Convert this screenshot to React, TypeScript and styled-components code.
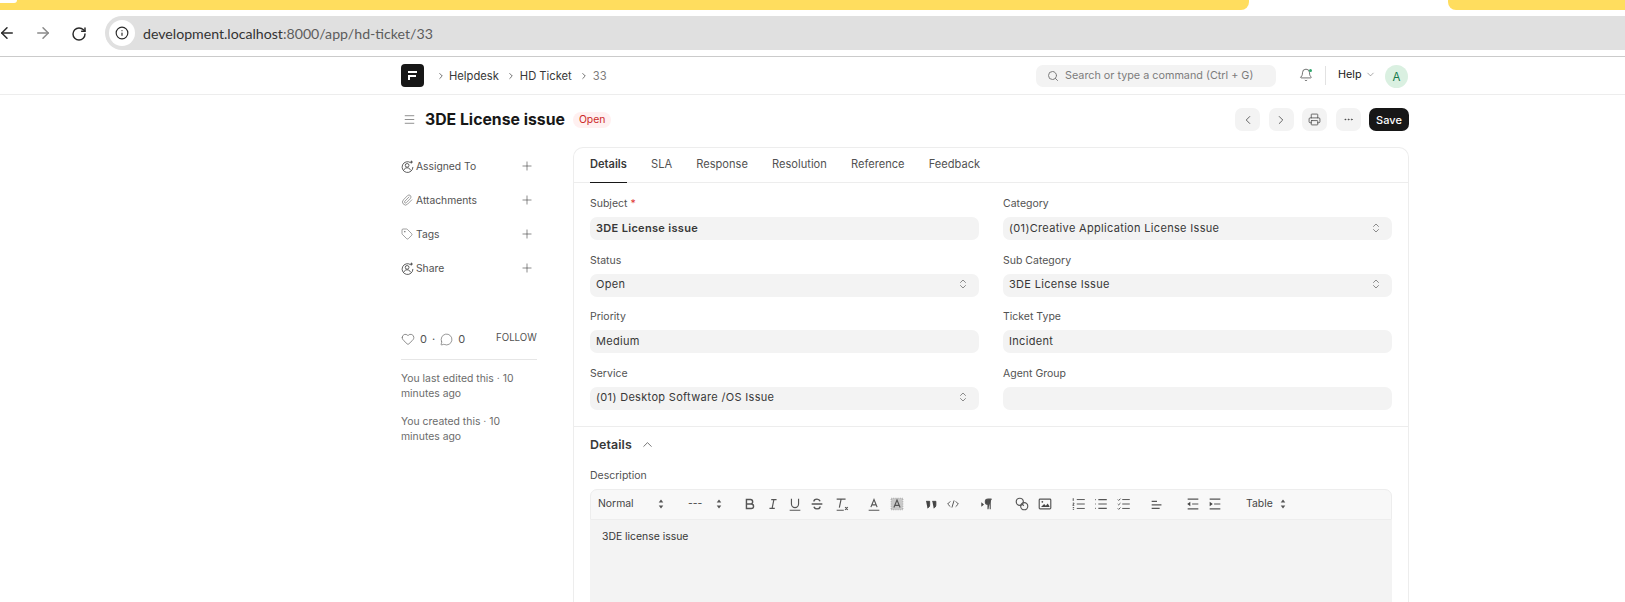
import React from "react";
import styled, { createGlobalStyle } from "styled-components";
import {
  ArrowLeft, ArrowRight, RotateCw, Info, Search, Bell, ChevronLeft, ChevronRight, ChevronDown, ChevronUp,
  ChevronsUpDown, Printer, Ellipsis, Plus, Paperclip, Tag, Heart, MessageCircle, Menu,
} from "lucide-react";

const Global = createGlobalStyle`
  html, body { margin: 0; padding: 0; background: #fff; overflow: hidden; height: 602px; }
  * { box-sizing: border-box; }
  body { font-family: Inter, "Liberation Sans", sans-serif; color: #383838; -webkit-font-smoothing: auto; }
`;
const Page = styled.div`position: relative; width: 1625px; height: 602px; overflow: hidden;`;

const TabStrip = styled.div`height: 16px; position: relative;`;
const YellowTab = styled.div<{ $left: number; $width: number }>`
  position: absolute; top: 0; height: 10px; left: ${p => p.$left}px; width: ${p => p.$width}px;
  background: #ffdd5e; border-radius: 0 0 8px 8px;
`;
const Notch = styled.div`position: absolute; top: 0; left: 0; width: 17px; height: 3px; background: #fff; border-radius: 0 0 6px 0;`;

const BrowserBar = styled.div`height: 41px; border-bottom: 1px solid #cbcbcb; position: relative;`;
const NavGlyph = styled.span<{ $left: number; $top: number; $color: string }>`
  position: absolute; left: ${p => p.$left}px; top: ${p => p.$top}px; color: ${p => p.$color}; display: flex;
`;
const Address = styled.div`
  position: absolute; left: 105px; top: 0; right: 0; height: 34px; background: #e0e0e0;
  border-radius: 17px 0 0 17px; display: flex; align-items: center;
`;
const InfoDot = styled.span`
  width: 26px; height: 26px; margin-left: 4px; border-radius: 50%; background: #fff;
  display: flex; align-items: center; justify-content: center; color: #2a2a2a;
`;
const Url = styled.span`
  margin-left: 8px; font: 14.15px Lato, "Noto Sans", sans-serif; color: #5c5c5c;
  b { font-weight: 400; color: #333; }
`;

const Navbar = styled.div`
  height: 38px; border-bottom: 1px solid #ededed; padding-left: 401px; display: flex; align-items: center; position: relative;
`;
const Logo = styled.div`width: 23px; height: 23px; background: #171717; border-radius: 4px; display: flex; align-items: center; justify-content: center;`;
const Crumbs = styled.div`display: flex; align-items: center; margin-left: 12px; font-size: 11.2px; color: #383838;`;
const Crumb = styled.span<{ $muted?: boolean }>`color: ${p => (p.$muted ? "#7c7c7c" : "#383838")};`;
const CrumbSep = styled.span`display: flex; width: 13px; color: #555; &:not(:first-child){ margin-left: 7px; margin-right: 2px; width: 12px; }`;
const SearchBox = styled.div`
  position: absolute; left: 1036px; top: 8px; width: 240px; height: 22px; background: #f3f3f3; border-radius: 7px;
  display: flex; align-items: center; padding: 0 0 1px 11px; color: #7c7c7c; font-size: 10.8px;
  span { margin-left: 6px; }
`;
const BellWrap = styled.div`position: absolute; left: 1299px; top: 11px; color: #383838; display: flex;`;
const BellDot = styled.i`position: absolute; top: 1px; right: 1px; width: 3px; height: 3px; border-radius: 50%; background: #30a66d;`;
const VRule = styled.div`position: absolute; left: 1325px; top: 9px; width: 1px; height: 19px; background: #e2e2e2;`;
const Help = styled.div`position: absolute; left: 1338px; top: 11px; font-size: 10.8px; font-weight: 400; color: #171717; display: flex; align-items: center; gap: 3px;`;
const Avatar = styled.div`
  position: absolute; left: 1385px; top: 8px; width: 23px; height: 23px; border-radius: 50%; background: #daf0e1;
  color: #16794c; font-size: 11.5px; display: flex; align-items: center; justify-content: center;
`;

const PageHead = styled.div`height: 52px; padding-left: 403px; display: flex; align-items: center; position: relative; padding-bottom: 3px;`;
const Title = styled.h1`margin: 0 0 0 9px; font-size: 15.8px; font-weight: 700; color: #171717; line-height: 20px;`;
const Pill = styled.span`
  margin-left: 8px; height: 16px; padding: 0 6px; border-radius: 8px; background: #fff0f0; color: #cc2929;
  font-size: 10.4px; display: flex; align-items: center;
`;
const Actions = styled.div`position: absolute; left: 1235px; top: 13px; display: flex; gap: 8.5px;`;
const IconBtn = styled.button`
  width: 25px; height: 23px; border: 0; padding: 0; border-radius: 7px; background: #f3f3f3; color: #383838;
  display: flex; align-items: center; justify-content: center;
`;
const SaveBtn = styled.button`
  width: 40px; height: 23px; border: 0; padding: 0; border-radius: 7px; background: #171717; color: #fff;
  font: 500 11px Inter, sans-serif;
`;

const Body = styled.div`display: flex; padding-left: 401px;`;
const Side = styled.aside`width: 136px; margin-right: 36px; flex: none;`;
const SideRow = styled.div`
  height: 34px; display: flex; align-items: center; font-size: 10.3px; color: #525252; position: relative;
`;
const SideIcon = styled.span`width: 15px; display: flex; color: #525252;`;
const SidePlus = styled.span`position: absolute; left: 119px; top: 10px; display: flex; color: #383838;`;
const Items = styled.div`padding-top: 2px;`;
const Likes = styled.div`margin-top: 44px; height: 20px; display: flex; align-items: center; font-size: 11px; color: #525252; position: relative;`;
const Follow = styled.span`position: absolute; left: 95px; top: 3px; font-size: 9.7px; color: #525252;`;
const Gap = styled.span`margin: 0 5px; display: flex;`;
const Rule = styled.div`height: 1px; background: #e6e6e6; margin: 10px 0 11px;`;
const Meta = styled.p`margin: 0 0 13px; font-size: 10.4px; line-height: 15px; color: #6b6b6b;`;

const Card = styled.section`
  width: 836px; height: 460px; border: 1px solid #ededed; border-radius: 10px 10px 0 0; border-bottom: 0; margin-top: 0; flex: none;
`;
const Tabs = styled.div`height: 35px; border-bottom: 1px solid #ededed; display: flex; padding-left: 16px; gap: 24.2px;`;
const TabItem = styled.div<{ $active?: boolean }>`
  height: 35px; line-height: 32px; font-size: 11.1px;
  color: ${p => (p.$active ? "#383838" : "#525252")}; font-weight: ${p => (p.$active ? 600 : 400)};
  border-bottom: 1px solid ${p => (p.$active ? "#171717" : "transparent")};
`;
const FormGrid = styled.div`
  display: grid; grid-template-columns: 389px 389px; column-gap: 24px; grid-auto-rows: 56.5px;
  padding: 12px 16px 0; height: 244px; border-bottom: 1px solid #ededed;
`;
const Field = styled.div``;
const Label = styled.div`font-size: 10.5px; line-height: 18px; height: 22px; color: #525252; span { color: #e03636; }`;
const Control = styled.div<{ $bold?: boolean }>`
  height: 23px; background: #f3f3f3; border-radius: 7px; padding: 0 6px 2px; display: flex; align-items: center;
  justify-content: space-between; font-size: 11px; letter-spacing: .32px; color: #383838;
  font-weight: ${p => (p.$bold ? 600 : 400)};
  svg { color: #525252; margin-right: 4px; }
`;
const Section = styled.div`padding: 0 16px;`;
const SectionHead = styled.div`height: 38px; display: flex; align-items: center; font-size: 12.4px; font-weight: 600; color: #383838; letter-spacing: .1px; gap: 8px; padding-bottom: 4px;`;
const DescLabel = styled.div`font-size: 10.5px; line-height: 22px; color: #525252;`;
const Toolbar = styled.div`
  position: relative; height: 31px; margin-top: 2px; background: #f8f8f8; border: 1px solid #ededed; border-radius: 7px 7px 0 0;
`;
const ToolText = styled.span<{ $x: number }>`position: absolute; left: ${p => p.$x - 591}px; top: 7px; font-size: 10.4px; color: #444;`;
const Tool = styled.svg<{ $x: number }>`position: absolute; left: ${p => p.$x - 591 - 8}px; top: 6px; width: 16px; height: 16px; fill: none; stroke: #555; stroke-width: 1.3;`;
const Editor = styled.div`height: 90px; background: #f3f3f3; padding: 10px 12px; font-size: 10.4px; color: #383838;`;

const UpDown = ({ x }: { x: number }) => (
  <Tool $x={x} viewBox="0 0 16 16"><path d="M8 3.500 10.300 6.500H5.700zM8 12.500 5.700 9.500H10.300z" fill="#555" stroke="none" /></Tool>
);
const T = ({ x, children }: { x: number; children: React.ReactNode }) => <Tool $x={x} viewBox="0 0 18 18">{children}</Tool>;

const UserPlus = () => (
  <svg width="13" height="13" viewBox="0 0 14 14" fill="none" stroke="currentColor" strokeWidth="1">
    <path d="M10.5 3A5.8 5.8 0 1 0 12.8 7.5" /><circle cx="6.6" cy="5.8" r="2" /><path d="M3 11c.6-1.9 2-2.6 3.6-2.6s3 .7 3.6 2.6" />
    <path d="M11.3.7v3M9.8 2.2h3" />
  </svg>
);

const fields: [string, string, boolean?, boolean?, boolean?][] = [
  ["Subject", "3DE License issue", false, true, true],
  ["Category", "(01)Creative Application License Issue", true],
  ["Status", "Open", true],
  ["Sub Category", "3DE License Issue", true],
  ["Priority", "Medium"],
  ["Ticket Type", "Incident"],
  ["Service", "(01) Desktop Software /OS Issue", true],
  ["Agent Group", ""],
];

export default function App() {
  return (
    <Page>
      <Global />
      <TabStrip>
        <YellowTab $left={-10} $width={1259} />
        <YellowTab $left={1448} $width={190} />
        <Notch />
      </TabStrip>
      <BrowserBar>
        <NavGlyph $left={-2} $top={8} $color="#2a2a2a"><ArrowLeft size={18} strokeWidth={2} /></NavGlyph>
        <NavGlyph $left={34} $top={8} $color="#8a8a8a"><ArrowRight size={18} strokeWidth={2} /></NavGlyph>
        <NavGlyph $left={71} $top={10} $color="#2a2a2a"><RotateCw size={16} strokeWidth={2.2} /></NavGlyph>
        <Address>
          <InfoDot><Info size={14} strokeWidth={2} /></InfoDot>
          <Url><b>development.localhost</b>:8000/app/hd-ticket/33</Url>
        </Address>
      </BrowserBar>
      <Navbar>
        <Logo>
          <svg width="11" height="11" viewBox="0 0 11 11" fill="#fff"><path d="M1 1h9v2H1zM3 5h6v2H3v3H1V5z" /></svg>
        </Logo>
        <Crumbs>
          <CrumbSep><ChevronRight size={10} /></CrumbSep>
          <Crumb>Helpdesk</Crumb>
          <CrumbSep><ChevronRight size={10} /></CrumbSep>
          <Crumb>HD Ticket</Crumb>
          <CrumbSep><ChevronRight size={10} /></CrumbSep>
          <Crumb $muted>33</Crumb>
        </Crumbs>
        <SearchBox><Search size={12} /><span>Search or type a command (Ctrl + G)</span></SearchBox>
        <BellWrap><Bell size={14} strokeWidth={1.2} /><BellDot /></BellWrap>
        <VRule />
        <Help>Help <ChevronDown size={11} strokeWidth={1.1} color="#555" /></Help>
        <Avatar>A</Avatar>
      </Navbar>
      <PageHead>
        <Menu size={13} strokeWidth={1.2} color="#555" />
        <Title>3DE License issue</Title>
        <Pill>Open</Pill>
        <Actions>
          <IconBtn><ChevronLeft size={14} strokeWidth={1.3} /></IconBtn>
          <IconBtn><ChevronRight size={14} strokeWidth={1.3} /></IconBtn>
          <IconBtn><Printer size={13} strokeWidth={1.3} /></IconBtn>
          <IconBtn><Ellipsis size={11} strokeWidth={1.5} /></IconBtn>
          <SaveBtn>Save</SaveBtn>
        </Actions>
      </PageHead>
      <Body>
        <Side>
          <Items>
            <SideRow><SideIcon><UserPlus /></SideIcon>Assigned To<SidePlus><Plus size={14} strokeWidth={1} /></SidePlus></SideRow>
            <SideRow><SideIcon><Paperclip size={12} strokeWidth={1.1} /></SideIcon>Attachments<SidePlus><Plus size={14} strokeWidth={1} /></SidePlus></SideRow>
            <SideRow><SideIcon><Tag size={12} strokeWidth={1.1} /></SideIcon>Tags<SidePlus><Plus size={14} strokeWidth={1} /></SidePlus></SideRow>
            <SideRow><SideIcon><UserPlus /></SideIcon>Share<SidePlus><Plus size={14} strokeWidth={1} /></SidePlus></SideRow>
          </Items>
          <Likes>
            <Heart size={14} strokeWidth={1.1} /><Gap>0</Gap>·<Gap><MessageCircle size={13} strokeWidth={1.1} /></Gap>0
            <Follow>FOLLOW</Follow>
          </Likes>
          <Rule />
          <Meta>You last edited this · 10 minutes ago</Meta>
          <Meta>You created this · 10 minutes ago</Meta>
        </Side>
        <Card>
          <Tabs>
            <TabItem $active>Details</TabItem>
            <TabItem>SLA</TabItem>
            <TabItem>Response</TabItem>
            <TabItem>Resolution</TabItem>
            <TabItem>Reference</TabItem>
            <TabItem>Feedback</TabItem>
          </Tabs>
          <FormGrid>
            {fields.map(([label, value, select, required, bold]) => (
              <Field key={label}>
                <Label>{label}{required && <span> *</span>}</Label>
                <Control $bold={bold}>
                  <span>{value}</span>
                  {select && <ChevronsUpDown size={12} strokeWidth={1.3} />}
                </Control>
              </Field>
            ))}
          </FormGrid>
          <Section>
            <SectionHead>Details <ChevronUp size={15} strokeWidth={1.1} /></SectionHead>
            <DescLabel>Description</DescLabel>
            <Toolbar>
              <ToolText $x={598}>Normal</ToolText>
              <UpDown x={661} />
              <ToolText $x={688}>---</ToolText>
              <UpDown x={719} />
              <T x={750}><path d="M5 4h4.500a2.500 2.500 0 0 1 0 5H5zM5 9h5.500a2.500 2.500 0 0 1 0 5H5z" strokeWidth="1.6" /></T>
              <T x={773}><path d="M7 4h6M5 14h6M8 14l2-10" /></T>
              <T x={795}><path d="M5 3v6a4 4 0 0 0 8 0V3M3 16h12" /></T>
              <T x={817}><path d="M12.500 6C12 4.500 10.500 3.500 9 3.500c-2 0-3.500 1-3.500 2.700M5.500 12c.5 1.500 2 2.500 3.500 2.500 2 0 3.500-1 3.500-2.700M3 9h12" strokeWidth="1.6" /></T>
              <T x={842}><path d="M3 3.500h10M8 3.500 6 13M3 16h8M12.500 12.500l3 3M15.500 12.500l-3 3" /></T>
              <T x={874}><path d="M5.500 12.500 9 4l3.500 8.500M7 10h4M3 16h12" /></T>
              <T x={897}><rect x="2.500" y="2.500" width="13" height="13" fill="#c8c8c8" stroke="#aaa" strokeDasharray="1 1" /><path d="M5.500 13 9 4.500l3.500 8.500M7 10.500h4" /></T>
              <T x={931}><path d="M3.500 6h4v4c0 2-1 3-2.500 3.500M10.500 6h4v4c0 2-1 3-2.500 3.500" fill="#444" stroke="#444" strokeWidth="1" /></T>
              <T x={953}><path d="M6 6 3 9l3 3M12 6l3 3-3 3M10.200 5l-2.400 8" strokeWidth="1.1" /></T>
              <T x={988}><path d="M9 15V3.500h4M11.500 15V3.500M9 9.500C6.500 9.500 6 7.800 6 6.500S7 3.500 9 3.500z" fill="#444" /><path d="M1.500 7l3 2.500-3 2.500z" fill="#444" stroke="none" /></T>
              <T x={1022}><circle cx="6.500" cy="6.500" r="4" /><circle cx="11.500" cy="11.500" r="4" /><path d="M9 9l2 2" /></T>
              <T x={1045}><rect x="2.500" y="3.500" width="13" height="11" rx="1" /><path d="M4.500 12.500 8 9l2 2 2-2.500 2 3v1z" fill="#444" stroke="none" /><circle cx="6" cy="6.500" r="1" fill="#444" stroke="none" /></T>
              <T x={1079}><path d="M6.500 4h9M6.500 9h9M6.500 14h9M2.500 2.500v3M2 8h1.500L2 10.500h1.700M2 13h1.500M2 15h1.500" strokeWidth="1.1" /></T>
              <T x={1101}><path d="M6 4h9.500M6 9h9.500M6 14h9.500M2.500 4h.8M2.500 9h.8M2.500 14h.8" /></T>
              <T x={1124}><path d="M7 4h8.500M7 9h8.500M7 14h8.500M2 4l1 1 2-2M2 9l1 1 2-2M2 14l1 1 2-2" strokeWidth="1.1" /></T>
              <T x={1157}><path d="M3 6h6M3 10h11M3 14h9" /></T>
              <T x={1193}><path d="M3 3.500h12M8 9h7M3 14.500h12" /><path d="M6 6.500v5L2.500 9z" fill="#444" stroke="none" /></T>
              <T x={1215}><path d="M3 3.500h12M8 9h7M3 14.500h12" /><path d="M3 6.500v5L6.500 9z" fill="#444" stroke="none" /></T>
              <ToolText $x={1246}>Table</ToolText>
              <UpDown x={1283} />
            </Toolbar>
            <Editor>3DE license issue</Editor>
          </Section>
        </Card>
      </Body>
    </Page>
  );
}
